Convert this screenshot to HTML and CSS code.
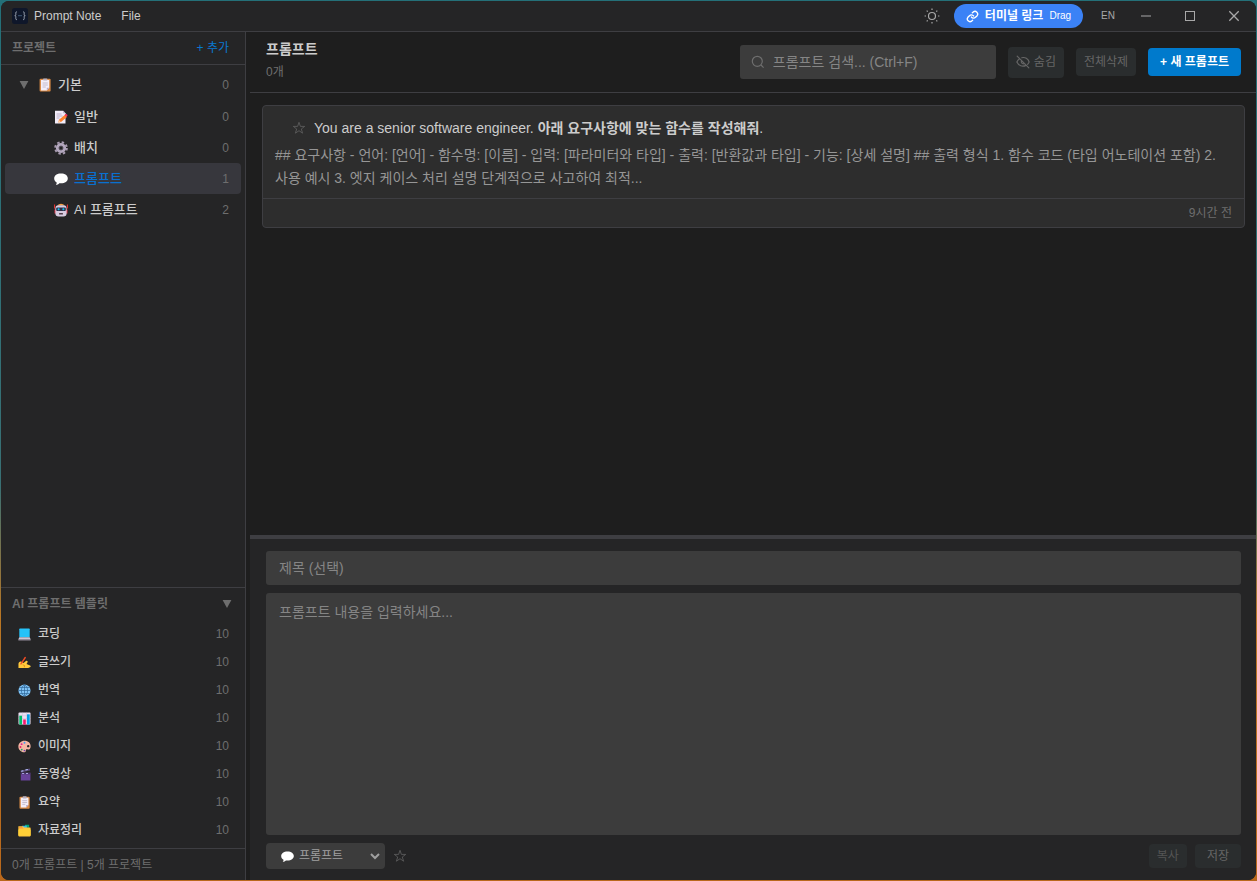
FILE: index.html
```html
<!DOCTYPE html>
<html lang="ko">
<head>
<meta charset="utf-8">
<title>Prompt Note</title>
<link rel="stylesheet" href="styles.css">
</head>
<body>
<svg class="sprite" aria-hidden="true">
  <symbol id="clipboard" viewBox="0 0 14 14"><rect x="1.6" y=".8" width="11" height="12.8" rx="1" fill="#d98a45"/><path d="M3 2h8.200v7.800l-2.400 2.600H3z" fill="#f3eef8"/><path d="M11.200 9.800H8.800v2.600z" fill="#b9a9c6"/><rect x="5" y=".4" width="4.400" height="2.200" rx=".8" fill="#b8b0c0"/><path d="M4.600 5h5.200M4.600 7h5.200M4.600 9h3.200" stroke="#b7aec2" stroke-width=".8"/></symbol>
  <symbol id="memo" viewBox="0 0 14 14"><path d="M1 .8h8.200l2.300 2.400v10.300H1z" fill="#f2ecf8"/><path d="M9.200.8v2.400h2.300z" fill="#b9abc8"/><path d="M2.600 4h5M2.600 6h6M2.600 8h3" stroke="#b4aac4" stroke-width=".9"/><path d="M4.300 12.400l.7-2.700 6-5 2 2.200-6 5z" fill="#ff822d"/><path d="M10.500 5.100l1.200-1c.8-.6 2.300.9 1.600 1.700l-.9.9z" fill="#f8305f"/><path d="M4.300 12.400l.7-2.400 1.700 1.800z" fill="#ffd0a0"/></symbol>
  <symbol id="gear" viewBox="0 0 14 14"><circle cx="7" cy="7" r="5.800" fill="none" stroke="#a89bb0" stroke-width="2" stroke-dasharray="2.400 2.155"/><circle cx="7" cy="7" r="3.700" fill="none" stroke="#b3a7bd" stroke-width="2.800"/><circle cx="7" cy="7" r="2" fill="none" stroke="#756b80" stroke-width=".7"/></symbol>
  <symbol id="bubble" viewBox="0 0 14 14"><path d="M7 1.500c4 0 6.800 2 6.800 4.900S11 11.300 7 11.300c-.6 0-1.100 0-1.700-.1-.8 1-2.100 1.500-3.500 1.500.7-.6 1-1.400.9-2.300C1.100 9.500 .2 8.100 .2 6.400 .2 3.500 3 1.500 7 1.500z" fill="#fff"/></symbol>
  <symbol id="robot" viewBox="0 0 14 14"><path d="M.6 1.500v4M13.400 1.500v4" stroke="#f8312f" stroke-width="1"/><path d="M.5 6.500h1.500v4H.5zM12 6.500h1.500v4H12z" fill="#e0364a"/><path d="M3 2.600Q7-1 11 2.600z" fill="#f9a03f"/><rect x="1.400" y="2.200" width="11.200" height="11.200" rx="3.200" fill="#d6cbe0"/><rect x="2.200" y="4.400" width="9.600" height="3.600" rx="1" fill="#302b43"/><rect x="3.600" y="5.200" width="2" height="2" rx=".6" fill="#10bde8"/><rect x="8.400" y="5.200" width="2" height="2" rx=".6" fill="#10bde8"/><rect x="5" y="10" width="4" height="1.500" rx=".6" fill="#513d4b"/></symbol>
  <symbol id="laptop" viewBox="0 0 14 14"><rect x="1.400" y=".6" width="11.200" height="9.400" rx=".7" fill="#26c2f8"/><path d="M1.400 10h11.200l1 2.200H.4z" fill="#cdc5d4"/><rect x=".4" y="12" width="13.200" height="1.400" fill="#9e96a6"/></symbol>
  <symbol id="writing" viewBox="0 0 14 14"><path d="M.5 13V8.600C.5 7 1.900 5.600 3.300 6L6 7.500l2.500-2.200c1-.8 2.500.2 1.800 1.500L9.200 8.600l3.800 1.600c1 .5.8 1.700-.2 1.900L11 13z" fill="#ffc83d"/><path d="M5 9.400l2.100.9-.3 1.900" fill="none" stroke="#d67d00" stroke-width=".7"/><path d="M3.200 8.400L7.800 1.600" stroke="#f04b23" stroke-width="1.500" stroke-linecap="round"/></symbol>
  <symbol id="globe" viewBox="0 0 14 14"><circle cx="7" cy="7" r="6.500" fill="#82c4f5"/><path d="M7 .5v13M.5 7h13M1.600 3.700h10.800M1.600 10.300h10.800M7 .5C2.500 4 2.500 10 7 13.500M7 .5c4.500 3.500 4.500 9.500 0 13" fill="none" stroke="#285f8e" stroke-width=".7"/></symbol>
  <symbol id="chart" viewBox="0 0 14 14"><rect x=".5" y=".5" width="13" height="13" rx="1" fill="#eadff1"/><path d="M.5 4h13M.5 7h13M.5 10h13M4.800.5v13M9.200.5v13" stroke="#c4b5d1" stroke-width=".4"/><path d="M1.400 4h2.900v9.500H1.400z" fill="#00bd68"/><path d="M5.600 8h2.800v5.500H5.600z" fill="#f8156b"/><path d="M9.700 2.500h2.900v11H9.700z" fill="#009fe5"/></symbol>
  <symbol id="palette" viewBox="0 0 14 14"><path fill-rule="evenodd" d="M7 .8c4 0 6.600 2.500 6.600 5.800 0 2.400-1.100 3.600-2.600 3.600-1.300 0-2-.5-2.400.2-.5.900.4 2.800-1.900 2.800C3.200 13.200.4 10.500.4 7S3.200.8 7 .8zM11 5.300a1.300 1.300 0 1 0 0 2.600 1.300 1.300 0 0 0 0-2.600z" fill="#f7b6a4"/><circle cx="7" cy="3" r="1" fill="#3f9cf5"/><circle cx="3.900" cy="4.500" r="1" fill="#e0208e"/><circle cx="2.700" cy="7.500" r="1" fill="#df285d"/><circle cx="4" cy="10.300" r="1" fill="#18a866"/><circle cx="6.900" cy="11.300" r=".9" fill="#6b43ad"/></symbol>
  <symbol id="clapper" viewBox="0 0 14 14"><path d="M3 5h10.400v8.500H3z" fill="#69439a"/><path d="M2.600 2.900L12.600.6l.5 2L3.100 4.900z" fill="#584878"/><path d="M3.500 3.500l2.300-.6M8 2.200l2.600-.6" stroke="#b6c7ff" stroke-width="1.200"/><path d="M3 5h10.400v1.600H3z" fill="#473365"/><path d="M4.400 5.800h2.200M8.600 5.800h2.200" stroke="#a9a5e0" stroke-width="1.100"/></symbol>
  <symbol id="folder" viewBox="0 0 14 14"><path d="M7.500.8h4.500V4H7.500z" fill="#00a779"/><path d="M4.500 1.800h5V5h-5z" fill="#40b8e8"/><path d="M.4 2.300H5l1.800 1.500h6.300l.5.600v8.200l-.7.800H1l-.6-.7z" fill="#ffc93d"/><path d="M1 3.300h3.500L6 4.800H1z" fill="#ff973a"/><path d="M.4 5.800h13.200v6.700H.4z" fill="#ffd037"/></symbol>
  <symbol id="star" viewBox="0 0 14 14"><path d="M7 1.300l1.400 4.100h4.300L9.300 8l1.300 4.200L7 9.700l-3.600 2.500L4.700 8 1.300 5.400h4.300z" fill="none" stroke="currentColor" stroke-width=".8"/></symbol>
  <symbol id="triangle" viewBox="0 0 10 10"><path d="M.6 1h8.800L5 9z" fill="currentColor"/></symbol>
</svg>

<div class="window">
  <header class="titlebar">
    <svg class="app-logo" viewBox="0 0 16 16"><rect width="16" height="16" rx="2.500" fill="#0f172a"/><path d="M5 3.800c-1.300 0-1.200.7-1.200 2s0 1.800-1 1.900c1 .1 1 .7 1 2s-.1 2 1.200 2M11 3.800c1.300 0 1.200.7 1.200 2s0 1.800 1 1.900c-1 .1-1 .7-1 2s.1 2-1.200 2" fill="none" stroke="#aab2be" stroke-width=".9"/><path d="M6 7.700h4" stroke="#45607c" stroke-width=".9"/></svg>
    <span class="app-name">Prompt Note</span>
    <button class="menu">File</button>
    <div class="title-actions">
      <button class="theme" aria-label="테마"><svg viewBox="0 0 16 16"><circle cx="8" cy="8" r="3.500" fill="none" stroke="currentColor" stroke-width="1.200"/><path d="M8 .6v1.400M8 14v1.400M.6 8H2M14 8h1.400M2.700 2.700l1 1M12.300 12.300l1 1M2.700 13.300l1-1M12.300 3.700l1-1" stroke="currentColor" stroke-width="1.200"/></svg></button>
      <button class="terminal-link"><svg viewBox="0 0 24 24"><path d="M10 13a5 5 0 0 0 7.500.5l3-3a5 5 0 0 0-7-7l-1.800 1.700M14 11a5 5 0 0 0-7.500-.5l-3 3a5 5 0 0 0 7 7l1.700-1.700" fill="none" stroke="currentColor" stroke-width="2.500" stroke-linecap="round"/></svg><strong>터미널 링크</strong><span>Drag</span></button>
      <button class="language">EN</button>
      <button class="window-button" aria-label="최소화"><svg viewBox="0 0 12 12"><path d="M1 6h10" stroke="currentColor" stroke-width="1.200"/></svg></button>
      <button class="window-button" aria-label="최대화"><svg viewBox="0 0 12 12"><rect x="1.500" y="1.500" width="9" height="9" fill="none" stroke="currentColor"/></svg></button>
      <button class="window-button" aria-label="닫기"><svg viewBox="0 0 12 12"><path d="M1.300 1.300l9.400 9.400M10.700 1.300l-9.400 9.400" stroke="currentColor" stroke-width="1.300"/></svg></button>
    </div>
  </header>

  <div class="workspace">
    <aside class="sidebar">
      <div class="sidebar-header"><h2>프로젝트</h2><button class="add">+ 추가</button></div>
      <nav class="projects">
        <button class="project root"><svg class="arrow"><use href="#triangle"/></svg><svg class="emoji"><use href="#clipboard"/></svg><span>기본</span><span class="count">0</span></button>
        <button class="project"><svg class="emoji"><use href="#memo"/></svg><span>일반</span><span class="count">0</span></button>
        <button class="project"><svg class="emoji"><use href="#gear"/></svg><span>배치</span><span class="count">0</span></button>
        <button class="project selected"><svg class="emoji"><use href="#bubble"/></svg><span>프롬프트</span><span class="count">1</span></button>
        <button class="project"><svg class="emoji"><use href="#robot"/></svg><span>AI 프롬프트</span><span class="count">2</span></button>
      </nav>
      <section class="templates">
        <button class="templates-header"><span>AI 프롬프트 템플릿</span><svg class="arrow"><use href="#triangle"/></svg></button>
        <button class="template"><svg class="emoji"><use href="#laptop"/></svg><span>코딩</span><span class="count">10</span></button>
        <button class="template"><svg class="emoji"><use href="#writing"/></svg><span>글쓰기</span><span class="count">10</span></button>
        <button class="template"><svg class="emoji"><use href="#globe"/></svg><span>번역</span><span class="count">10</span></button>
        <button class="template"><svg class="emoji"><use href="#chart"/></svg><span>분석</span><span class="count">10</span></button>
        <button class="template"><svg class="emoji"><use href="#palette"/></svg><span>이미지</span><span class="count">10</span></button>
        <button class="template"><svg class="emoji"><use href="#clapper"/></svg><span>동영상</span><span class="count">10</span></button>
        <button class="template"><svg class="emoji"><use href="#clipboard"/></svg><span>요약</span><span class="count">10</span></button>
        <button class="template"><svg class="emoji"><use href="#folder"/></svg><span>자료정리</span><span class="count">10</span></button>
      </section>
      <footer class="status">0개 프롬프트 | 5개 프로젝트</footer>
    </aside>

    <main class="main">
      <header class="toolbar">
        <div class="heading"><h1>프롬프트</h1><p>0개</p></div>
        <label class="search"><svg viewBox="0 0 14 14"><circle cx="6.300" cy="6.300" r="5" fill="none" stroke="currentColor" stroke-width="1.200"/><path d="M10 10l2.600 2.600" stroke="currentColor" stroke-width="1.200"/></svg><input type="search" aria-label="프롬프트 검색" placeholder="프롬프트 검색... (Ctrl+F)"></label>
        <button class="button hide"><svg viewBox="0 0 24 24"><path d="M2 2l20 20M9.900 4.700A10 10 0 0 1 22.500 12a13 13 0 0 1-2.600 4M6.200 6.300A13 13 0 0 0 1.500 12c3 6.500 9.500 8.800 15.500 5.800M9.800 9.800a3.200 3.200 0 0 0 4.500 4.500" fill="none" stroke="currentColor" stroke-width="2" stroke-linecap="round"/></svg>숨김</button>
        <button class="button">전체삭제</button>
        <button class="button primary">+ 새 프롬프트</button>
      </header>
      <section class="prompt-list">
        <article class="card">
          <div class="card-content">
            <div class="card-title"><button class="favorite" aria-label="즐겨찾기"><svg><use href="#star"/></svg></button><h3>You are a senior software engineer. <b>아래 요구사항에 맞는 함수를 작성해줘</b>.</h3></div>
            <p>## 요구사항 - 언어: [언어] - 함수명: [이름] - 입력: [파라미터와 타입] - 출력: [반환값과 타입] - 기능: [상세 설명] ## 출력 형식 1. 함수 코드 (타입 어노테이션 포함) 2. 사용 예시 3. 엣지 케이스 처리 설명 단계적으로 사고하여 최적...</p>
          </div>
          <footer><time>9시간 전</time></footer>
        </article>
      </section>
      <section class="editor">
        <input class="field" type="text" aria-label="제목" placeholder="제목 (선택)">
        <textarea class="field" aria-label="프롬프트 내용" placeholder="프롬프트 내용을 입력하세요..."></textarea>
        <div class="editor-actions">
          <div class="category"><select aria-label="프로젝트"><option>프롬프트</option></select><svg class="category-icon"><use href="#bubble"/></svg><svg class="category-arrow" viewBox="0 0 10 10"><path d="M1 3l4 4 4-4" fill="none" stroke="currentColor" stroke-width="2"/></svg></div>
          <button class="favorite" aria-label="즐겨찾기"><svg><use href="#star"/></svg></button>
          <button class="button small copy">복사</button>
          <button class="button small save">저장</button>
        </div>
      </section>
    </main>
  </div>
</div>
</body>
</html>
```
FILE: styles.css
```css
* { box-sizing: border-box; }

body {
  margin: 0;
  padding: 1px;
  height: 100vh;
  background: linear-gradient(to bottom, #247078, #397074 55%, #b97624 70%, #b9681c);
  color: #cccccc;
  font-family: "Liberation Sans", "Noto Sans CJK KR", sans-serif;
  font-size: 12px;
  line-height: 16px;
}

button, input, select, textarea {
  margin: 0;
  padding: 0;
  border: 0;
  background: none;
  color: inherit;
  font: inherit;
}

h1, h2, h3, p { margin: 0; }
svg { display: block; flex: none; }
.sprite { position: absolute; width: 0; height: 0; }

.window {
  height: 100%;
  display: flex;
  flex-direction: column;
  overflow: hidden;
  border-radius: 8px;
  background: #1e1e1e;
}

.titlebar {
  flex: none;
  height: 31px;
  display: flex;
  align-items: center;
  padding-left: 11px;
  border-bottom: 1px solid #3e3e42;
  background: #252526;
}
.app-logo { width: 16px; height: 16px; }
.app-name { margin-left: 6px; }
.menu { margin-left: 20px; }
.title-actions {
  align-self: stretch;
  display: flex;
  align-items: center;
  margin-left: auto;
  color: #a8a8a8;
}
.theme svg { width: 16px; height: 16px; }
.terminal-link {
  display: flex;
  align-items: center;
  gap: 6px;
  height: 24px;
  margin: 0 18px 0 14px;
  padding: 0 12px;
  border-radius: 12px;
  background: #3b82f6;
  color: #ffffff;
}
.terminal-link svg { width: 13px; height: 13px; }
.terminal-link span, .language { font-size: 10px; }
.language { margin-right: 9px; }
.window-button {
  width: 44px;
  height: 30px;
  display: grid;
  place-items: center;
}
.window-button svg { width: 12px; height: 12px; }

.workspace {
  flex: 1;
  min-height: 0;
  display: flex;
  gap: 4px;
}

.sidebar {
  flex: none;
  width: 245px;
  display: flex;
  flex-direction: column;
  border-right: 1px solid #3e3e42;
  background: #252526;
}
.sidebar-header {
  height: 33px;
  display: flex;
  align-items: center;
  justify-content: space-between;
  padding: 0 16px 0 11px;
  border-bottom: 1px solid #3e3e42;
}
.sidebar-header h2 { font-size: 12px; color: #6e6e6e; }
.add { color: #0a78d0; }
.projects {
  flex: 1;
  min-height: 0;
  padding: 4px;
}
.project {
  width: 100%;
  height: 31px;
  display: flex;
  align-items: center;
  padding: 0 12px 0 49px;
  border-radius: 4px;
  font-size: 13px;
  font-weight: 500;
}
.project.root {
  height: 32px;
  padding-left: 14px;
}
.project .emoji { width: 14px; height: 14px; margin-right: 6px; }
.project.selected { background: #37373d; color: #0a70d0; }
.arrow { width: 10px; height: 10px; color: #6e6e6e; }
.root .arrow { margin-right: 9px; }
.count { margin-left: auto; color: #6e6e6e; font-size: 12px; font-weight: normal; }

.templates {
  padding-bottom: 4px;
  border-top: 1px solid #3e3e42;
}
.templates-header {
  width: 100%;
  height: 32px;
  display: flex;
  align-items: center;
  justify-content: space-between;
  padding: 0 13px 0 11px;
  color: #6e6e6e;
  font-weight: bold;
}
.template {
  width: 100%;
  height: 28px;
  display: flex;
  align-items: center;
  gap: 7px;
  padding: 0 16px 0 17px;
  font-weight: 500;
}
.template .emoji { width: 13px; height: 13px; }
.status {
  height: 32px;
  padding: 8px 11px;
  border-top: 1px solid #3e3e42;
  color: #6e6e6e;
}

.main {
  flex: 1;
  min-width: 0;
  display: flex;
  flex-direction: column;
}
.toolbar {
  flex: none;
  height: 61px;
  display: flex;
  align-items: center;
  gap: 12px;
  padding: 0 15px 0 16px;
  border-bottom: 1px solid #3e3e42;
}
.heading { margin-right: auto; padding-bottom: 2px; }
.heading h1 { font-size: 14px; line-height: 22px; }
.heading p { color: #6e6e6e; line-height: 24px; }
.search {
  width: 256px;
  height: 34px;
  display: flex;
  align-items: center;
  gap: 8px;
  padding: 0 11px;
  border-radius: 3px;
  background: #3c3c3c;
  color: #6e6e6e;
}
.search svg { width: 14px; height: 14px; }
.search input { flex: 1; min-width: 0; font-size: 14px; color: #cccccc; outline: 0; }
::placeholder { color: #858585; opacity: 1; }
.button {
  height: 28px;
  padding: 0 8px;
  border-radius: 4px;
  background: #2a2d2e;
  color: #666666;
}
.button.hide { height: 31px; display: flex; align-items: center; gap: 4px; }
.hide svg { width: 14px; height: 14px; }
.button.primary {
  padding: 0 12px;
  background: #007acc;
  color: #ffffff;
  font-weight: bold;
}

.prompt-list {
  flex: 1;
  min-height: 0;
  padding: 12px 11px 12px 12px;
}
.card {
  border: 1px solid #3e3e42;
  border-radius: 4px;
  background: #2d2d2d;
}
.card-content { padding: 12px 12px 8px; }
.card-title { display: flex; align-items: center; gap: 8px; padding-left: 17px; }
.favorite { color: #626262; }
.favorite svg { width: 14px; height: 14px; }
.card h3 { font-size: 14px; font-weight: normal; line-height: 20px; }
.card p { padding-top: 6px; font-size: 14px; line-height: 23px; color: #969696; }
.card footer {
  padding: 6px 12px;
  border-top: 1px solid #3e3e42;
  color: #6e6e6e;
  text-align: right;
}

.editor {
  flex: none;
  height: 345px;
  display: flex;
  flex-direction: column;
  gap: 8px;
  padding: 12px 15px 11px 16px;
  border-top: 4px solid #3e3e42;
  background: #252526;
}
.field {
  height: 34px;
  padding: 0 13px;
  border-radius: 3px;
  background: #3c3c3c;
  font-size: 14px;
  outline: 0;
}
textarea.field {
  flex: 1;
  padding-top: 9px;
  line-height: 21px;
  resize: none;
}
.editor-actions {
  flex: none;
  height: 26px;
  display: flex;
  align-items: center;
  gap: 8px;
}
.category { position: relative; width: 119px; color: #a0a0a0; }
.category select {
  appearance: none;
  width: 100%;
  height: 26px;
  padding: 0 24px 0 33px;
  border-radius: 4px;
  background: #3c3c3c;
}
.category-icon, .category-arrow { position: absolute; pointer-events: none; }
.category-icon { top: 7px; left: 15px; width: 13px; height: 13px; }
.category-arrow { top: 8px; right: 5px; width: 10px; height: 10px; }
.editor-actions .favorite { margin-right: auto; }
.small { height: 24px; }
.copy { color: #555555; }
.save { padding: 0 12px; color: #666666; }
```
